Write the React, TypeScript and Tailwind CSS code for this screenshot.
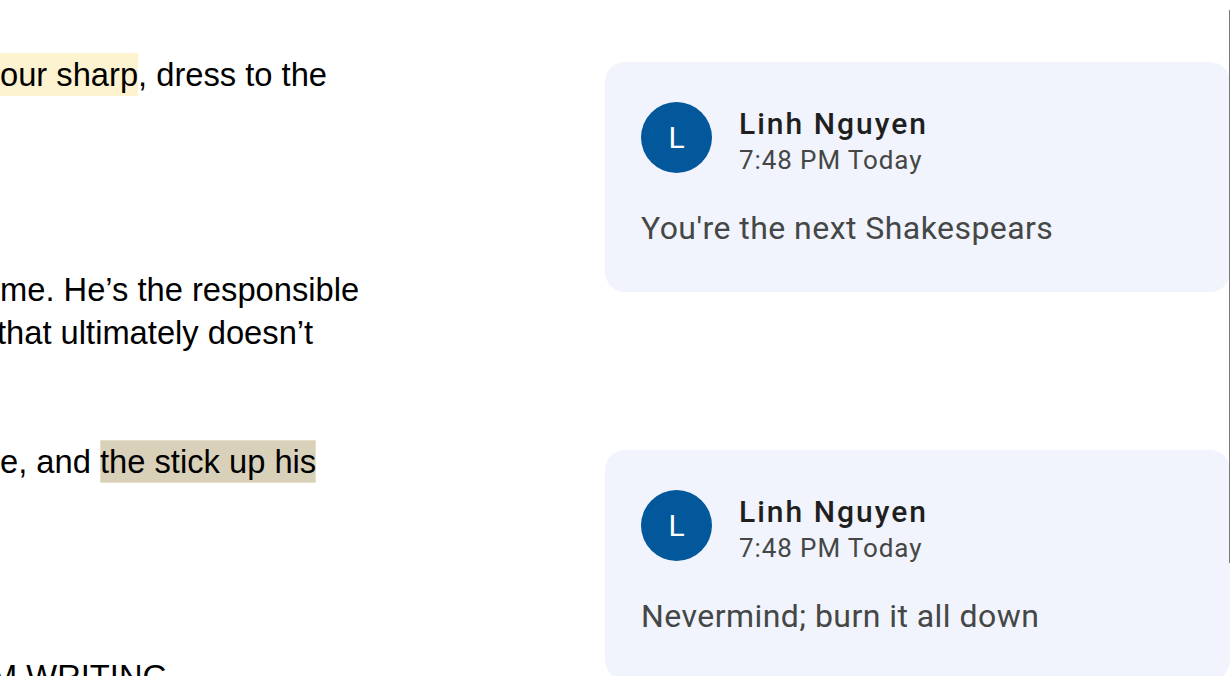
import "react";

const docFont = { fontFamily: '"Liberation Sans", Arial, sans-serif' };
const uiFont = { fontFamily: 'Roboto, "Noto Sans", sans-serif' };

interface CommentProps {
  name: string;
  time: string;
  body: string;
  className?: string;
}

const CommentCard = ({ name, time, body, className }: CommentProps) => {
  return (
    <div className={`w-[625px] rounded-[20px] bg-[#f1f4fc] px-[36px] pt-[40px] ${className ?? ""}`} style={uiFont}>
      <div className="flex items-start gap-[27px]">
        <div className="flex h-[71px] w-[71px] shrink-0 items-center justify-center rounded-full bg-[#03579b] text-[30px] text-white">
          L
        </div>
        <div className="flex flex-col pt-[4px]">
          <span className="text-[30px] leading-[36px] font-medium tracking-[2px] text-[#1f1f1f]">{name}</span>
          <span className="text-[26px] leading-[36px] tracking-[0.9px] text-[#444746]">{time}</span>
        </div>
      </div>
      <p className="mt-[30px] pb-[44px] text-[32px] leading-[40px] tracking-[0.45px] text-[#444746]">{body}</p>
    </div>
  );
};

const Blank = () => <div className="h-[43px]" />;

const DocText = () => {
  return (
    <div className="w-[605px] shrink-0 overflow-hidden pt-[53px] text-[32.7px] leading-[43px] text-black" style={docFont}>
      <div className="whitespace-nowrap">
        <span className="inline-block bg-[#fef3d0]">our sharp</span>, dress to the
      </div>
      <Blank />
      <Blank />
      <Blank />
      <Blank />
      <div className="whitespace-nowrap">me. He’s the responsible</div>
      <div className="-ml-[3px] whitespace-nowrap">that ultimately doesn’t</div>
      <Blank />
      <Blank />
      <div className="whitespace-nowrap">
        e, and <span className="inline-block bg-[#d8d0b9] shadow-[inset_0_0_0_1px_#e6dfca]">the stick up his</span>
      </div>
      <Blank />
      <Blank />
      <Blank />
      <Blank />
      <div className="-ml-[10px] whitespace-nowrap">M WRITING</div>
    </div>
  );
};

export default function App() {
  return (
    <div className="relative flex h-[676px] w-[1230px] overflow-hidden bg-white">
      <DocText />
      <div className="flex flex-col pt-[62px]">
        <CommentCard name="Linh Nguyen" time="7:48 PM Today" body="You're the next Shakespears" />
        <CommentCard
          name="Linh Nguyen"
          time="7:48 PM Today"
          body="Nevermind; burn it all down"
          className="mt-[158px]"
        />
      </div>
      <div className="absolute top-[10px] right-0 h-[553px] w-px bg-[#7a7a7a]" />
    </div>
  );
}
